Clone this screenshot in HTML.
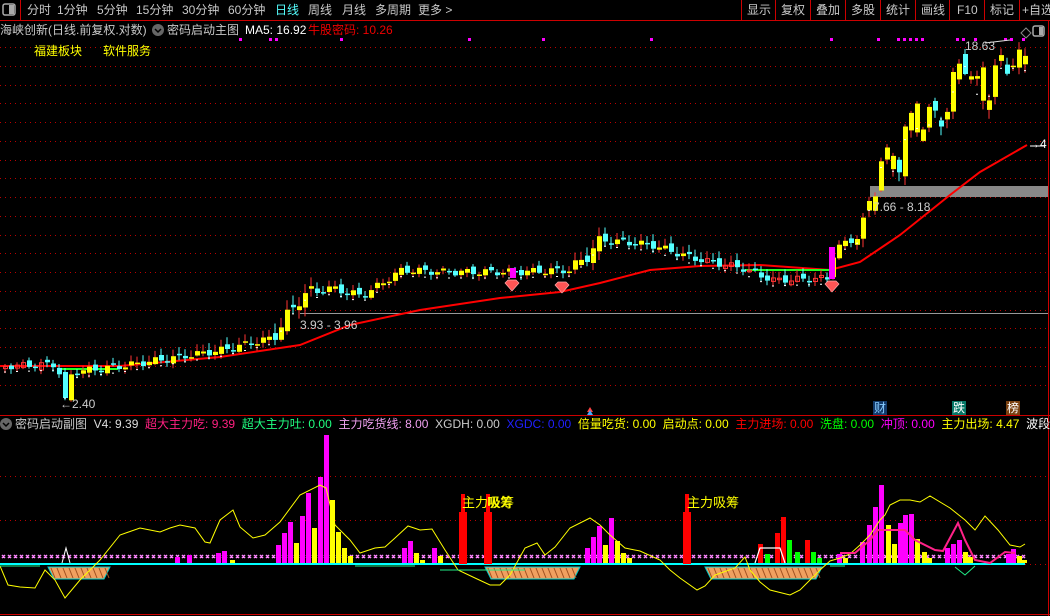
<!DOCTYPE html>
<html><head><meta charset="utf-8">
<style>
html,body{margin:0;padding:0;background:#000;}
body{width:1050px;height:616px;overflow:hidden;position:relative;font-family:"Liberation Sans","Noto Sans CJK SC",sans-serif;font-size:12px;color:#c8c8c8;}
.t{position:absolute;white-space:nowrap;line-height:14px;}
svg{position:absolute;left:0;top:0;}
</style></head><body>
<svg id="s" width="1050" height="616" xmlns="http://www.w3.org/2000/svg">
<line x1="0" y1="20.5" x2="1050" y2="20.5" stroke="#c00" stroke-width="1"/>
<line x1="20.5" y1="0" x2="20.5" y2="20" stroke="#c00"/>
<rect x="3" y="4" width="12" height="11" rx="2" fill="none" stroke="#aaa" stroke-width="1.5"/>
<rect x="9" y="5" width="5" height="9" fill="#aaa"/>
<g stroke="#c00"><line x1="741.5" y1="0" x2="741.5" y2="20"/><line x1="775.5" y1="0" x2="775.5" y2="20"/><line x1="810.5" y1="0" x2="810.5" y2="20"/><line x1="845.5" y1="0" x2="845.5" y2="20"/><line x1="880.5" y1="0" x2="880.5" y2="20"/><line x1="915.5" y1="0" x2="915.5" y2="20"/><line x1="949.5" y1="0" x2="949.5" y2="20"/><line x1="984.5" y1="0" x2="984.5" y2="20"/><line x1="1019.5" y1="0" x2="1019.5" y2="20"/></g>
<line x1="1048.5" y1="20" x2="1048.5" y2="616" stroke="#c00"/>
<line x1="0" y1="415.5" x2="1050" y2="415.5" stroke="#c00"/>
<line x1="0" y1="614.5" x2="1050" y2="614.5" stroke="#c00"/>
<circle cx="158" cy="30" r="6" fill="#666"/><path d="M155 29l3 3 3-3" stroke="#000" stroke-width="1.5" fill="none"/>
<circle cx="6" cy="424" r="6" fill="#666"/><path d="M3 423l3 3 3-3" stroke="#000" stroke-width="1.5" fill="none"/>
<path d="M1021 33l5-5 5 5-5 5z" fill="none" stroke="#888"/>
<rect x="1033" y="26" width="11" height="10" rx="2" fill="none" stroke="#aaa" stroke-width="1.5"/><rect x="1039" y="27" width="4" height="8" fill="#aaa"/>
<g id="g"></g>
</svg>
<div class="t" style="left:27px;top:3px">分时</div>
<div class="t" style="left:57px;top:3px">1分钟</div>
<div class="t" style="left:97px;top:3px">5分钟</div>
<div class="t" style="left:136px;top:3px">15分钟</div>
<div class="t" style="left:182px;top:3px">30分钟</div>
<div class="t" style="left:228px;top:3px">60分钟</div>
<div class="t" style="left:275px;top:3px;color:#5ff">日线</div>
<div class="t" style="left:308px;top:3px">周线</div>
<div class="t" style="left:342px;top:3px">月线</div>
<div class="t" style="left:375px;top:3px">多周期</div>
<div class="t" style="left:418px;top:3px">更多 &gt;</div>
<div class="t" style="left:747px;top:3px">显示</div>
<div class="t" style="left:781px;top:3px">复权</div>
<div class="t" style="left:816px;top:3px">叠加</div>
<div class="t" style="left:851px;top:3px">多股</div>
<div class="t" style="left:886px;top:3px">统计</div>
<div class="t" style="left:921px;top:3px">画线</div>
<div class="t" style="left:957px;top:3px">F10</div>
<div class="t" style="left:990px;top:3px">标记</div>
<div class="t" style="left:1022px;top:3px">+自选</div>
<div class="t" style="left:0;top:23px">海峡创新(日线.前复权.对数)</div>
<div class="t" style="left:167px;top:23px">密码启动主图</div>
<div class="t" style="left:245px;top:23px;color:#fff">MA5: 16.92</div>
<div class="t" style="left:308px;top:23px;color:#e00">牛股密码: 10.26</div>
<div class="t" style="left:34px;top:44px;color:#ff0">福建板块</div>
<div class="t" style="left:103px;top:44px;color:#ff0">软件服务</div>
<div class="t" style="left:300px;top:318px;color:#ccc">3.93 - 3.96</div>
<div class="t" style="left:873px;top:200px;color:#ccc">7.66 - 8.18</div>
<div class="t" style="left:965px;top:39px;color:#ccc">18.63</div>
<div class="t" style="left:60px;top:397px;color:#ccc">←2.40</div>
<div class="t" style="left:1028px;top:137px;color:#fff">→4</div>
<div class="t" style="left:873px;top:401px;color:#8cf;background:#123a6a;padding:0 1px">财</div>
<div class="t" style="left:952px;top:401px;color:#fff;background:#087868;padding:0 1px">跌</div>
<div class="t" style="left:1006px;top:401px;color:#fff;background:#7a4010;padding:0 1px">榜</div>
<div class="t" style="left:15px;top:417px">密码启动副图&nbsp; <span style="color:#ddd">V4: 9.39</span>&nbsp; <span style="color:#ff2080">超大主力吃: 9.39</span>&nbsp; <span style="color:#20ff80">超大主力吐: 0.00</span>&nbsp; <span style="color:#f0a0f0">主力吃货线: 8.00</span>&nbsp; <span style="color:#ccc">XGDH: 0.00</span>&nbsp; <span style="color:#2020ff">XGDC: 0.00</span>&nbsp; <span style="color:#ff0">倍量吃货: 0.00</span>&nbsp; <span style="color:#ff0">启动点: 0.00</span>&nbsp; <span style="color:#f00">主力进场: 0.00</span>&nbsp; <span style="color:#0f0">洗盘: 0.00</span>&nbsp; <span style="color:#f0f">冲顶: 0.00</span>&nbsp; <span style="color:#ff0">主力出场: 4.47</span>&nbsp; <span style="color:#fff">波段介入</span></div>
<div class="t" style="left:462px;top:496px;color:#ff0;font-size:13px">主力吸筹</div>
<div class="t" style="left:487px;top:496px;color:#ff0;font-size:13px">吸筹</div>
<div class="t" style="left:687px;top:496px;color:#ff0;font-size:13px">主力吸筹</div>
<script>
(function(){
var g=document.getElementById('g'),h='';
function R(x,y,w,hh,c,extra){h+='<rect x="'+x+'" y="'+y+'" width="'+w+'" height="'+hh+'" fill="'+c+'" '+(extra||'')+'/>';}
function P(d,c,w,extra){h+='<path d="'+d+'" stroke="'+c+'" stroke-width="'+(w||1)+'" fill="none" '+(extra||'')+'/>';}
function L(pts){return 'M'+pts.map(function(p){return p[0]+' '+p[1]}).join('L');}
for(var y=47;y<402;y+=18.75){P('M0 '+Math.round(y)+'.5H1046','#b00',1,'stroke-dasharray="1 4"');}
[476,520,564].forEach(function(y){P('M0 '+y+'.5H1046','#b00',1,'stroke-dasharray="1 4"');});
[239,269,275,340,468,542,650,830,877,897,903,909,915,921,956,962,974,1004,1010,1022].forEach(function(x){R(x,38,3,3,'#f0f');});
R(870,186,178,11,'#888');
P('M300 313.5H1048','#999',1);
P('M985 43L1010 40','#ddd',1);
P('M1030 146H1045','#fff',1);
function interp(kp,x){for(var i=1;i<kp.length;i++){if(x<=kp[i][0]){var a=kp[i-1],b=kp[i];return a[1]+(b[1]-a[1])*(x-a[0])/(b[0]-a[0]);}}return kp[kp.length-1][1];}
var kp=[[3,366],[55,364],[62,395],[70,372],[120,366],[220,350],[270,338],[300,295],[330,288],[360,296],[400,270],[440,272],[510,272],[570,270],[590,250],[600,240],[650,245],[690,258],[740,268],[770,280],[826,278],[832,250],[845,242],[860,235],[868,200],[880,158],[895,168],[905,125],[925,120],[945,110],[960,50],[970,85],[985,95],[1000,60],[1025,65]];
var ma=[[0,366],[120,366],[220,357],[300,345],[350,325],[420,310],[500,298],[560,292],[600,283],[650,270],[700,266],[760,265],[830,270],[860,262],[900,235],[950,195],[980,172],[1027,145]];
P(L(ma),'#f00',2);
P('M60 369H118','#2f2',2);P('M745 270H830','#2f2',2);
var prev=366,wd='';
for(var i=0;i<171;i++){var x=3+6*i;var amp=x>=860?14:(x>=270&&x<=310)||(x>=570&&x<=600)?7:3.5;
 var c=interp(kp,x)+Math.sin(i*1.7)*amp;var o=prev+Math.sin(i*2.3+1)*amp*0.7;
 if(x===63){o=372;c=398;}
 var tp=Math.min(o,c),bt=Math.max(o,c);if(bt-tp<1.5)bt=tp+1.5;
 var col=c<o?'#ff0':'#5ff';
 if(x>=860&&Math.sin(i*5.1)>-0.3)col='#ff0';
 if((x<60||(x>690&&x<830))&&c<o){col='#f33';}
 var wt=tp-2-Math.abs(Math.sin(i*3.1))*(amp>5?8:5),wb=bt+1+Math.abs(Math.cos(i*2.7))*(amp>5?8:4);
 h+='<line x1="'+(x+2)+'" y1="'+wt.toFixed(1)+'" x2="'+(x+2)+'" y2="'+wb.toFixed(1)+'" stroke="'+(col=='#ff0'?'#f33':col)+'"/>';
 if(col=='#f33')R(x+0.5,(tp+0.5).toFixed(1),4,(bt-tp).toFixed(1),'none','stroke="#f33"');else R(x,tp.toFixed(1),5,(bt-tp).toFixed(1),col);
 if(i%2==0)wd+='M'+(x+1)+' '+(interp(kp,x)+6).toFixed(1)+'h2';
 prev=c;}
P(wd,'#fff',1);
R(829,247,6,32,'#f0f');R(510,268,6,10,'#f0f');
[[512,286],[562,288],[832,287]].forEach(function(p){h+='<path d="M'+(p[0]-7)+' '+(p[1]-3)+'l3-3h8l3 3l-7 8z" fill="#f55" stroke="#faa" stroke-width="0.7"/>';});
h+='<path d="M587 412l3-5 3 5z" fill="#f44"/><path d="M587 415l3-5 3 5z" fill="#4af"/>';
R(0,563,1025,2,'#0ff');
var xm='';for(var x=2;x<1025;x+=6){xm+='M'+x+' 555l3 3M'+(x+3)+' 555l-3 3';}
P(xm,'#f8f',1.5);
var hs=[[48,110],[485,580],[705,822]];
hs.forEach(function(a){h+='<path d="M'+a[0]+' 567H'+a[1]+'L'+(a[1]-6)+' 579H'+(a[0]+6)+'Z" fill="#f0a060" stroke="#0cc" stroke-width="1"/>';var d='';for(var x=a[0]+3;x<a[1]-4;x+=6)d+='M'+x+' 568l4 10';P(d,'#a05020',1);});
var bars=[[175,557,'#f0f'],[187,555,'#f0f'],[216,553,'#f0f'],[222,551,'#f0f'],[230,560,'#ff0'],[276,545,'#f0f'],[282,533,'#f0f'],[288,522,'#f0f'],[294,543,'#ff0'],[300,516,'#f0f'],[306,493,'#f0f'],[312,528,'#ff0'],[318,477,'#f0f'],[324,435,'#f0f'],[330,500,'#ff0'],[336,532,'#ff0'],[342,548,'#ff0'],[348,556,'#ff0'],[402,548,'#f0f'],[408,541,'#f0f'],[414,553,'#ff0'],[420,560,'#ff0'],[432,548,'#f0f'],[438,556,'#ff0'],
[585,548,'#f0f'],[591,537,'#f0f'],[597,526,'#f0f'],[603,545,'#ff0'],[609,518,'#f0f'],[615,541,'#ff0'],[621,553,'#ff0'],[627,558,'#ff0'],
[758,544,'#f00'],[765,554,'#0f0'],[775,533,'#f00'],[781,517,'#f00'],[787,540,'#0f0'],[795,552,'#0f0'],[805,540,'#f00'],[811,552,'#0f0'],[817,558,'#0f0'],
[837,554,'#f0f'],[843,558,'#ff0'],[860,542,'#f0f'],[867,525,'#f0f'],[873,507,'#f0f'],[879,485,'#f0f'],[886,525,'#ff0'],[892,544,'#ff0'],[898,523,'#f0f'],[903,515,'#f0f'],[909,514,'#f0f'],[915,539,'#ff0'],[922,552,'#ff0'],[927,558,'#ff0'],[945,548,'#f0f'],[951,544,'#f0f'],[957,540,'#f0f'],[963,552,'#ff0'],[968,557,'#ff0'],[1006,554,'#f0f'],[1011,549,'#f0f'],[1017,556,'#ff0'],[1022,560,'#ff0']];
bars.forEach(function(b){R(b[0],b[1],5,563-b[1],b[2]);});
[[459,494],[484,494],[683,494]].forEach(function(b){R(b[0]+2,b[1],4,70,'#f00');R(b[0],512,8,52,'#f00');});
P('M755 563L760 548H780L785 563','#fff',1.2);P('M62 563L66 548L70 563','#fff',1);
var yl=[[0,566],[8,585],[20,587],[35,588],[45,570],[55,580],[65,598],[80,580],[100,560],[120,535],[140,528],[150,530],[160,532],[170,528],[180,525],[195,528],[205,542],[210,543],[220,520],[233,510],[240,527],[253,538],[265,535],[280,522],[300,495],[320,485],[326,488],[335,525],[350,540],[360,553],[375,548],[385,547],[395,538],[408,526],[420,530],[432,529],[445,550],[458,570],[475,578],[490,585],[500,585],[510,575],[525,548],[537,543],[545,555],[555,547],[570,528],[590,518],[600,525],[610,535],[625,548],[640,551],[660,560],[670,570],[680,578],[697,590],[705,586],[715,575],[735,568],[745,557],[750,570],[760,582],[770,590],[790,595],[800,590],[810,580],[820,570],[830,561],[840,558],[850,554],[860,545],[870,535],[880,520],[885,515],[890,505],[900,500],[910,500],[920,502],[930,496],[950,508],[965,520],[975,530],[985,516],[998,530],[1010,545],[1020,547],[1025,544]];
P(L(yl),'#ff0',1);
P(L([[840,553],[855,553],[870,540],[878,530],[905,530],[915,540],[935,550],[943,551],[958,523],[965,540],[975,560],[990,563],[1005,552],[1015,553]]),'#f28',2);
P('M0 566H40M355 566H415M440 570L525 570M830 566H845M955 567L965 575L975 566','#2e8',1);
g.innerHTML=h;
})();
</script>
</body></html>
